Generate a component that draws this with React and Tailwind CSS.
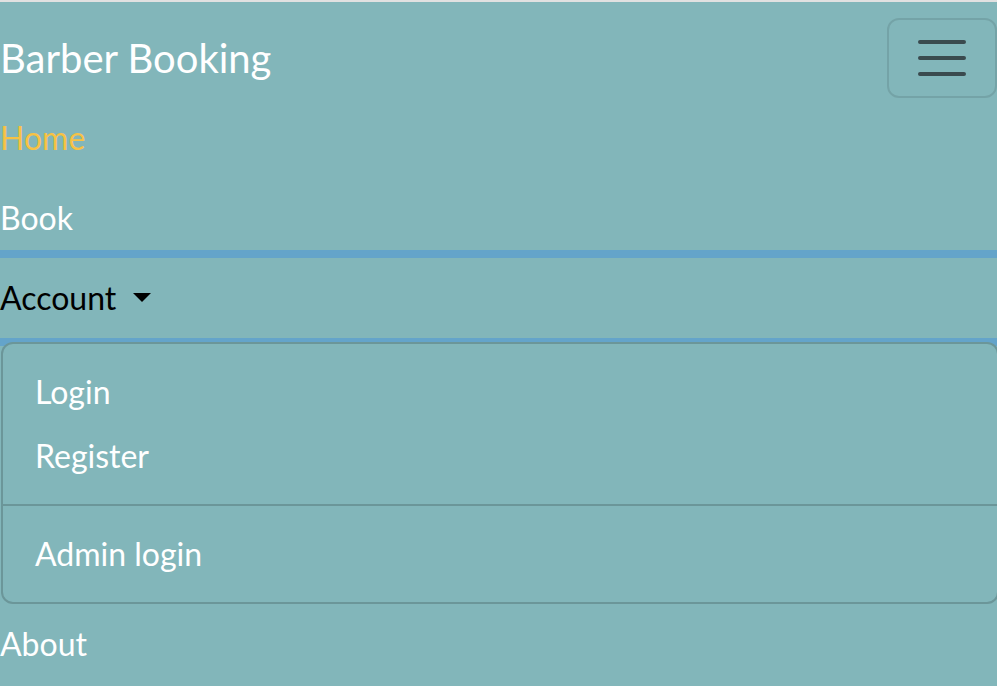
import React from "react";

export default function App() {
  return (
    <div className="w-[997px] h-[686px] overflow-hidden bg-[#82b6ba] font-['Lato',sans-serif]">
      <div className="h-[2px] bg-[#e1e1e1]" />
      <nav className="py-4">
        <div className="flex items-center justify-between">
          <a href="#" className="py-[10px] text-[40px] leading-[1.5] text-white">
            Barber Booking
          </a>
          <button className="w-[110px] h-[80px] border-2 border-[rgba(0,0,0,0.1)] rounded-[12px] flex items-center justify-center">
            <svg width="60" height="60" viewBox="0 0 30 30" aria-hidden="true">
              <path
                d="M4 7h22M4 15h22M4 23h22"
                stroke="rgba(33,37,41,0.75)"
                strokeWidth="2"
                strokeLinecap="round"
                strokeMiterlimit="10"
                fill="none"
              />
            </svg>
          </button>
        </div>
        <ul className="flex flex-col">
          <li>
            <a href="#" className="block py-4 text-[32px] leading-[1.5] text-[#f7c244]">
              Home
            </a>
          </li>
          <li>
            <a href="#" className="block py-4 text-[32px] leading-[1.5] text-white">
              Book
            </a>
          </li>
          <li>
            <a
              href="#"
              className="block py-4 text-[32px] leading-[1.5] text-black shadow-[0_0_0_8px_rgba(13,110,253,0.25)]"
            >
              Account{" "}
              <span className="inline-block ml-[8px] align-[0.255em] border-t-[9.6px] border-x-[9.6px] border-b-0 border-t-black border-x-transparent" />
            </a>
            <div className="mt-[4px] ml-px -mr-[2px] bg-[#82b6ba] border-2 border-[rgba(0,0,0,0.175)] rounded-[12px] py-4">
              <a href="#" className="block px-8 py-2 text-[32px] leading-[1.5] text-white">
                Login
              </a>
              <a href="#" className="block px-8 py-2 text-[32px] leading-[1.5] text-white">
                Register
              </a>
              <div className="my-4 border-t-2 border-[rgba(0,0,0,0.175)]" />
              <a href="#" className="block px-8 py-2 text-[32px] leading-[1.5] text-white">
                Admin login
              </a>
            </div>
          </li>
          <li>
            <a href="#" className="block py-4 text-[32px] leading-[1.5] text-white">
              About
            </a>
          </li>
        </ul>
      </nav>
    </div>
  );
}
